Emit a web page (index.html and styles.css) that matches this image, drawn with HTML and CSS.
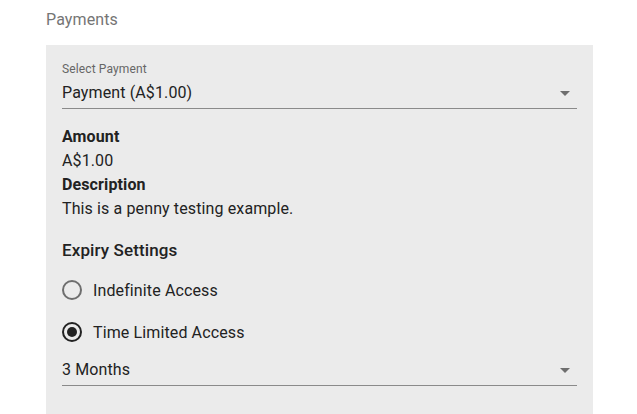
FILE: index.html
```html
<!DOCTYPE html>
<html>
<head>
<meta charset="utf-8">
<link rel="stylesheet" href="styles.css">
</head>
<body>
<div class="page">
  <div class="title">Payments</div>
  <div class="panel">
    <div class="field">
      <div class="field-label">Select Payment</div>
      <div class="select">
        <span>Payment (A$1.00)</span>
        <span class="arrow"></span>
      </div>
    </div>
    <div class="info">
      <div class="info-label">Amount</div>
      <div class="info-value">A$1.00</div>
      <div class="info-label">Description</div>
      <div class="info-value">This is a penny testing example.</div>
    </div>
    <div class="section-title">Expiry Settings</div>
    <div class="radios">
      <div class="radio-row">
        <span class="radio"></span>
        <span class="radio-text">Indefinite Access</span>
      </div>
      <div class="radio-row">
        <span class="radio checked"></span>
        <span class="radio-text">Time Limited Access</span>
      </div>
    </div>
    <div class="select months">
      <span>3 Months</span>
      <span class="arrow"></span>
    </div>
  </div>
</div>
</body>
</html>
```

FILE: styles.css
```css
html, body {
  margin: 0;
  padding: 0;
  background: #ffffff;
}
body {
  font-family: Roboto, "Liberation Sans", sans-serif;
  color: #222222;
  letter-spacing: 0.12px;
}
.page {
  margin-left: 46px;
  width: 547px;
}
.title {
  padding-top: 8px;
  font-size: 16px;
  line-height: 24px;
  color: #757575;
  height: 37px;
}
.panel {
  background: #ebebeb;
  padding: 16px 16px 40px;
  min-height: 360px;
}
.field-label {
  font-size: 12px;
  line-height: 16px;
  color: #666666;
  margin-bottom: 4px;
}
.select {
  display: flex;
  align-items: center;
  justify-content: space-between;
  font-size: 16px;
  line-height: 24px;
  padding-bottom: 3px;
  border-bottom: 1px solid #8a8a8a;
}
.arrow {
  width: 0;
  height: 0;
  border-left: 5px solid transparent;
  border-right: 5px solid transparent;
  border-top: 5px solid #6e6e6e;
  margin-right: 7px;
}
.info {
  margin-top: 16px;
  font-size: 16px;
  line-height: 24px;
}
.info-label {
  font-weight: 700;
}
.section-title {
  margin-top: 17px;
  font-size: 17px;
  line-height: 24px;
  font-weight: 500;
}
.radios {
  margin-top: 8px;
  display: flex;
  flex-direction: column;
  gap: 2px;
}
.radio-row {
  display: flex;
  align-items: center;
  height: 40px;
  gap: 11px;
  font-size: 16px;
}
.radio {
  box-sizing: border-box;
  width: 20px;
  height: 20px;
  border: 2px solid #6e6e6e;
  border-radius: 50%;
  display: flex;
  align-items: center;
  justify-content: center;
}
.radio.checked {
  border-color: #222222;
}
.radio.checked::after {
  content: "";
  width: 10px;
  height: 10px;
  border-radius: 50%;
  background: #222222;
}
.months {
  margin-top: 6px;
}
```
